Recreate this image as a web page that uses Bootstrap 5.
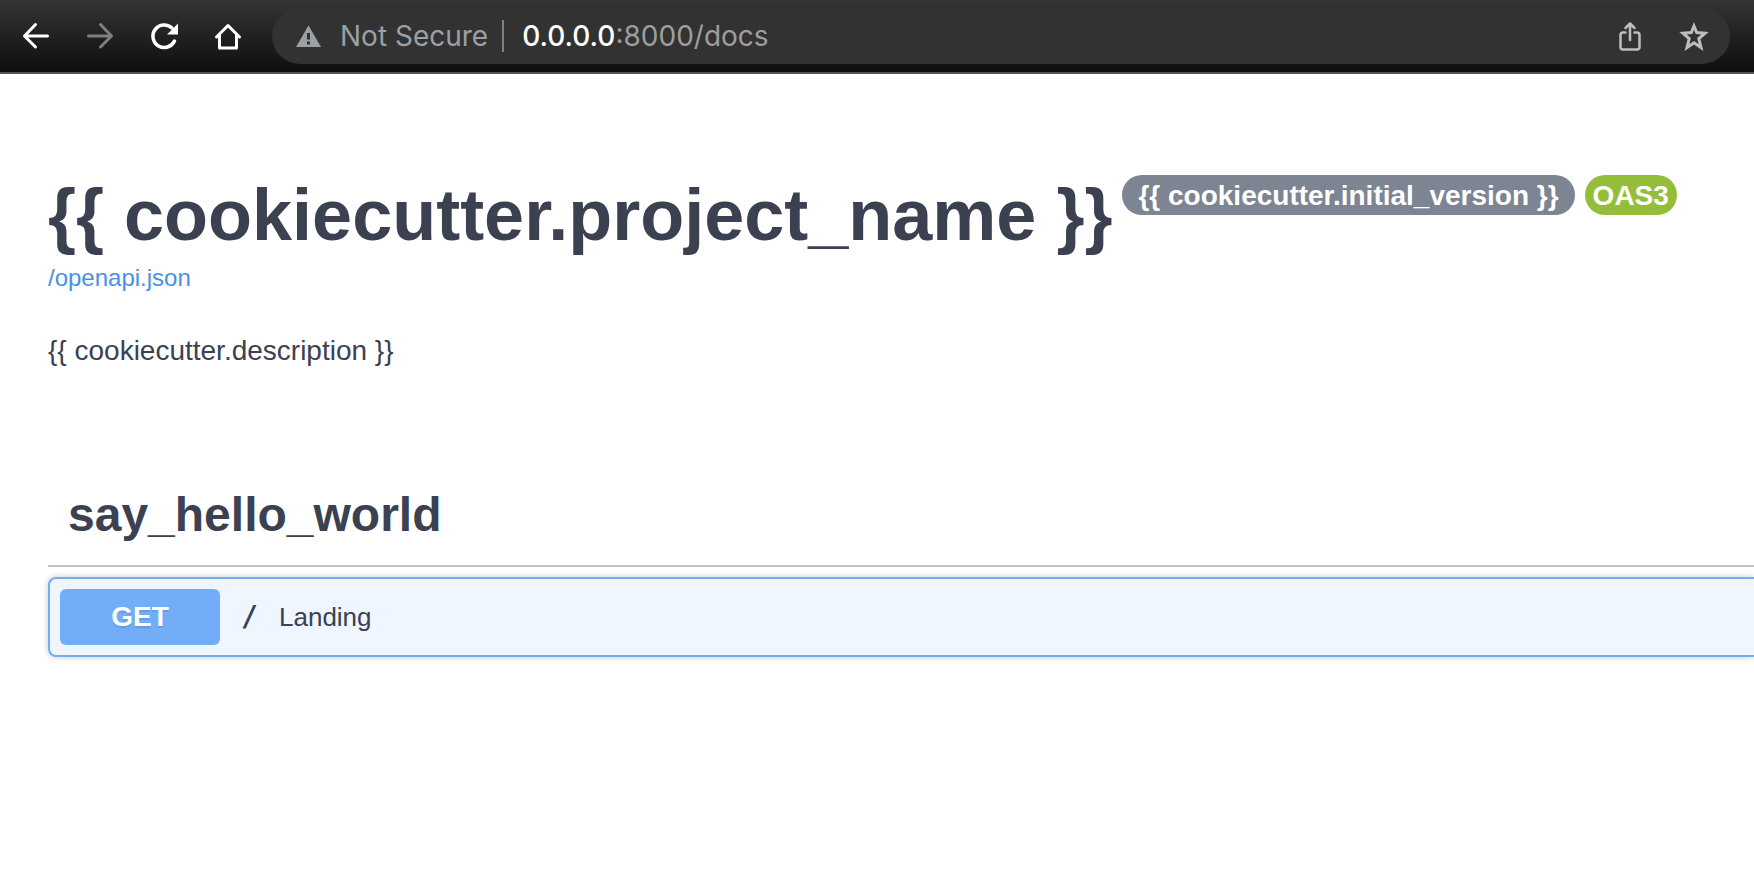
<!DOCTYPE html>
<html lang="en">
<head>
<meta charset="utf-8">
<meta name="viewport" content="width=device-width, initial-scale=1">
<title>API docs</title>
<link href="https://cdn.jsdelivr.net/npm/bootstrap@5.3.0/dist/css/bootstrap.min.css" rel="stylesheet">
<style>
  body { font-family: "Liberation Sans", Arial, sans-serif; color: #3b4151; background: #fff; overflow-x: hidden; }
  svg { display: block; }

  .browser-bar { height: 74px; padding: 8px 24px 8px 20px; background: linear-gradient(#343434, #0e0e0e); border-bottom: 2px solid #555; font-family: Inter, "Noto Sans", sans-serif; font-size: 28px; line-height: 36px; }
  .nav-keys { gap: 32px; padding-right: 28px; }
  .plain-btn { padding: 0; border: 0; background: none; color: #fff; }
  .plain-btn:disabled { color: #808080; }
  .omnibox { height: 56px; padding: 0 20px 0 21px; background: #323232; }
  .site-info { gap: 15px; color: #9aa0a6; }
  .divider { width: 2px; height: 32px; margin: 0 18px 0 14px; background: #808080; }
  .address { color: #9e9e9e; outline: 0; }
  .address span { color: #fff; font-weight: 500; }
  .omnibox-actions { gap: 32px; }
  .omnibox-actions .plain-btn { color: #bdbdbd; }

  .docs { padding: 100px 0 40px 48px; }
  .api-title { font-size: 72px; line-height: 82px; font-weight: 700; margin: 0 0 8px; }
  .pills { gap: 10px; margin-left: 10px; padding-top: 1px; }
  .pill { height: 40px; padding: 0 16px; border-radius: 20px; background: #7d8492; color: #fff; font-size: 28px; line-height: 42px; font-weight: 700; white-space: nowrap; }
  .pill-oas { padding: 0 8px; background: #94be39; }
  .spec-link { color: #4990e2; font-size: 24px; line-height: 28px; text-decoration: none; }
  .description { margin: 40px 0 116px; font-size: 28px; line-height: 36px; }
  .tag-title { margin: 0 0 10px; padding: 0 20px 20px; border-bottom: 2px solid #c4c4c8; font-size: 48px; line-height: 60px; font-weight: 700; }
  .operation { height: 80px; padding: 10px; border: 2px solid #72adf7; border-radius: 8px 0 0 8px; background: #eff6ff; box-shadow: 0 0 6px rgba(0, 0, 0, .22); color: inherit; }
  .verb { width: 160px; height: 56px; border-radius: 6px; background: #72adf8; color: #fff; font-size: 28px; line-height: 56px; font-weight: 700; text-align: center; text-shadow: 0 2px 0 rgba(0, 0, 0, .1); }
  .op-path { width: 59px; text-align: center; font-family: "DejaVu Sans Mono", monospace; font-size: 28px; line-height: 40px; font-weight: 700; }
  .op-summary { font-size: 26px; line-height: 40px; }
</style>
</head>
<body>
<header class="browser-bar d-flex align-items-center">
  <nav class="nav-keys d-flex" aria-label="Browser">
    <button class="plain-btn" type="button" aria-label="Back">
      <svg width="32" height="32" viewBox="0 0 32 32" fill="none" stroke="currentColor" stroke-width="3" stroke-linecap="round" stroke-linejoin="round"><path d="M27.500 16H4.500M15.500 4.500L4.500 16L15.500 27"/></svg>
    </button>
    <button class="plain-btn" type="button" aria-label="Forward" disabled>
      <svg width="32" height="32" viewBox="0 0 32 32" fill="none" stroke="currentColor" stroke-width="3" stroke-linecap="round" stroke-linejoin="round"><path d="M4.500 16H27.500M16.500 4.500L27.500 16L16.500 27"/></svg>
    </button>
    <button class="plain-btn" type="button" aria-label="Reload">
      <svg width="32" height="32" viewBox="0 0 32 32" fill="none" stroke="currentColor" stroke-width="3.500" stroke-linecap="round"><path d="M26.500 21A11.300 11.300 0 1 1 24 8"/><path d="M30 3.500V14.500H19Z" fill="currentColor" stroke="none"/></svg>
    </button>
    <button class="plain-btn" type="button" aria-label="Home">
      <svg width="32" height="32" viewBox="0 0 32 32" fill="none" stroke="currentColor" stroke-width="3" stroke-linecap="round" stroke-linejoin="round"><path d="M4.500 17L16 5.500L27.500 17M7.500 15V28H24.500V15"/></svg>
    </button>
  </nav>
  <div class="omnibox d-flex align-items-center flex-grow-1 rounded-pill">
    <button class="plain-btn site-info d-flex align-items-center text-nowrap" type="button">
      <svg width="32" height="32" viewBox="0 0 32 32"><path d="M15.500 5.500L28 27H3Z" fill="currentColor"/><path d="M14 13H17V19.500H14ZM14 21.500H17V24.500H14Z" fill="#323232"/></svg>
      Not Secure
    </button>
    <div class="divider"></div>
    <div class="address flex-grow-1" role="textbox" aria-label="Address" contenteditable="true" spellcheck="false"><span>0.0.0.0</span>:8000/docs</div>
    <div class="omnibox-actions d-flex">
      <button class="plain-btn" type="button" aria-label="Share">
        <svg width="32" height="32" viewBox="0 0 32 32" fill="none" stroke="currentColor" stroke-width="2.500" stroke-linecap="round" stroke-linejoin="round"><path d="M11.500 12.500H9A2.500 2.500 0 0 0 6.500 15V27A2.500 2.500 0 0 0 9 29.500H23A2.500 2.500 0 0 0 25.500 27V15A2.500 2.500 0 0 0 23 12.500H20.500M16 20V3.500M11.500 8L16 3.500L20.500 8"/></svg>
      </button>
      <button class="plain-btn" type="button" aria-label="Bookmark">
        <svg width="32" height="32" viewBox="0 0 32 32" fill="none" stroke="currentColor" stroke-width="3"><path d="M16 6L18.700 12.600L27 13.300L20.800 18.600L23 27.500L16 22.800L9 27.500L11.200 18.600L5 13.300L13.300 12.600Z"/></svg>
      </button>
    </div>
  </div>
</header>

<main class="docs">
  <div class="d-flex flex-wrap flex-xl-nowrap align-items-start">
    <h1 class="api-title">{{ cookiecutter.project_name }}</h1>
    <div class="pills d-flex">
      <span class="pill">{{ cookiecutter.initial_version }}</span>
      <span class="pill pill-oas">OAS3</span>
    </div>
  </div>
  <a class="spec-link d-inline-block" href="#openapi">/openapi.json</a>
  <p class="description">{{ cookiecutter.description }}</p>

  <section>
    <h2 class="tag-title">say_hello_world</h2>
    <button class="operation d-flex align-items-center w-100 text-start border-end-0" type="button">
      <span class="verb">GET</span>
      <span class="op-path">/</span>
      <span class="op-summary">Landing</span>
    </button>
  </section>
</main>
<script src="https://cdn.jsdelivr.net/npm/bootstrap@5.3.0/dist/js/bootstrap.bundle.min.js"></script>
</body>
</html>
